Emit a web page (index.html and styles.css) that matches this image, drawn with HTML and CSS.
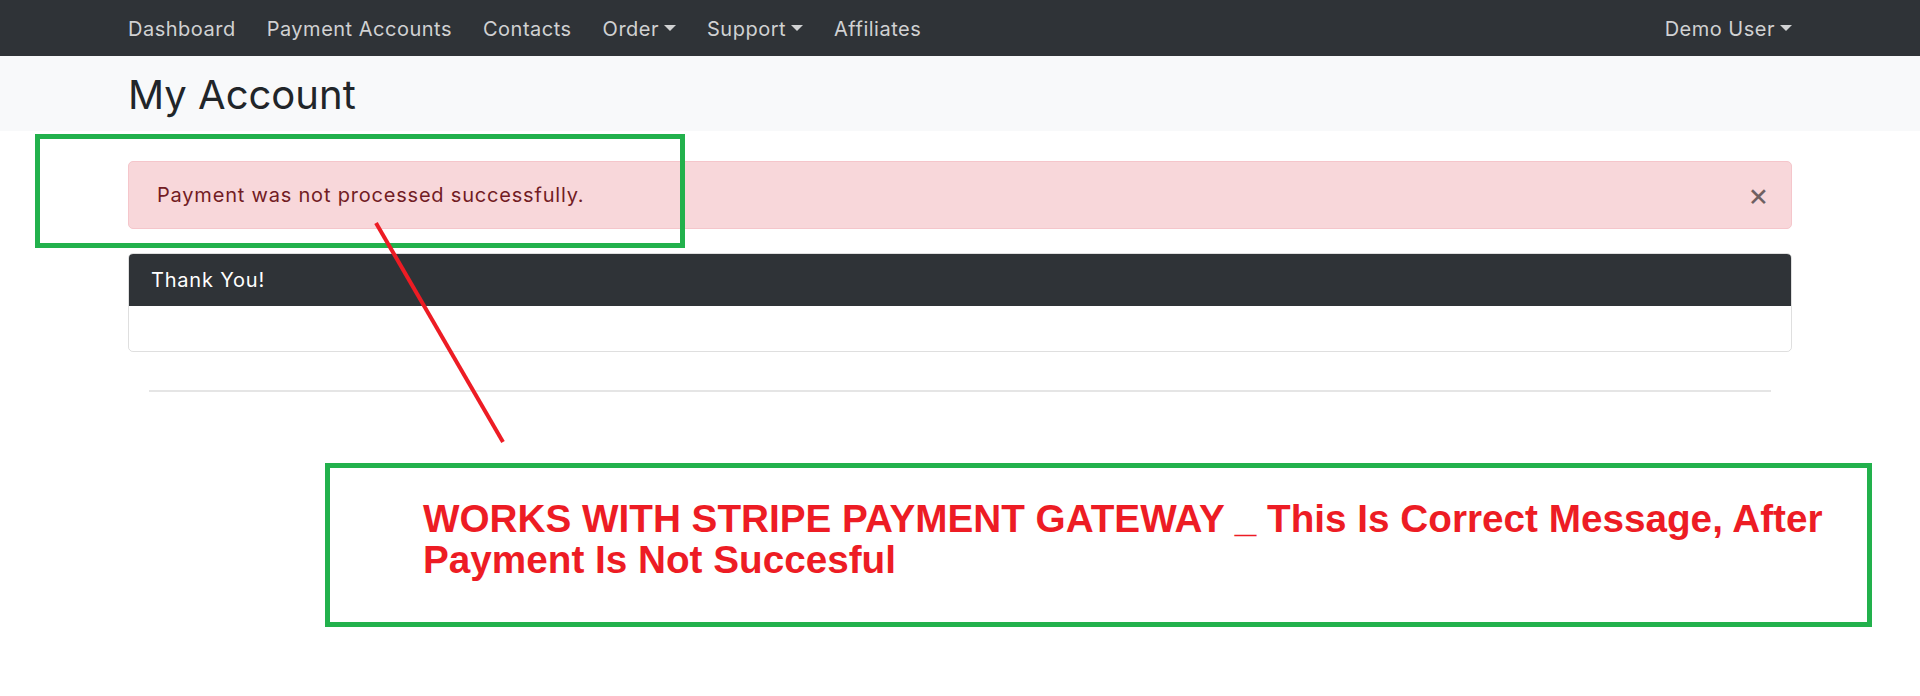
FILE: index.html
```html
<!DOCTYPE html>
<html lang="en">

<head>
    <meta charset="UTF-8">
    <title>My Account</title>
    <link rel="stylesheet" href="styles.css">
</head>

<body>
    <nav class="navbar">
        <div class="container navbar-inner">
            <ul class="nav">
                <li><a href="#">Dashboard</a></li>
                <li><a href="#">Payment Accounts</a></li>
                <li><a href="#">Contacts</a></li>
                <li><a href="#" class="dropdown-toggle">Order</a></li>
                <li><a href="#" class="dropdown-toggle">Support</a></li>
                <li><a href="#">Affiliates</a></li>
            </ul>
            <ul class="nav">
                <li><a href="#" class="dropdown-toggle">Demo User</a></li>
            </ul>
        </div>
    </nav>

    <header class="page-header">
        <div class="container">
            <h1>My Account</h1>
        </div>
    </header>

    <main class="container main">
        <div class="alert">
            <span>Payment was not processed successfully.</span>
            <button class="close" type="button">&times;</button>
        </div>

        <div class="card">
            <div class="card-header">Thank You!</div>
            <div class="card-body"></div>
        </div>

        <div class="divider">
            <hr>
        </div>
    </main>

    <!-- screenshot markup -->
    <div class="mark mark-alert"></div>
    <svg class="mark-line" width="140" height="230" viewBox="0 0 140 230">
        <line x1="6" y1="5" x2="133" y2="224" stroke="#ed1c24" stroke-width="4" />
    </svg>
    <div class="mark mark-note">
        <p>WORKS WITH STRIPE PAYMENT GATEWAY _ This Is Correct Message, After<br>Payment Is Not Succesful</p>
    </div>
</body>

</html>
```

FILE: styles.css
```css
* {
    margin: 0;
    padding: 0;
    box-sizing: border-box;
}

body {
    font-family: Inter, "Noto Sans", sans-serif;
    font-size: 20px;
    line-height: 30px;
    letter-spacing: 0.8px;
    color: #212529;
    background: #fff;
    position: relative;
    min-height: 696px;
}

.container {
    padding: 0 128px;
}

/* navbar */
.navbar {
    background: #2f3337;
}

.navbar-inner {
    display: flex;
    justify-content: space-between;
    height: 56px;
    padding-top: 2px;
    align-items: center;
}

.nav {
    display: flex;
    gap: 31px;
    list-style: none;
}

.nav a {
    color: rgba(255, 255, 255, 0.78);
    text-decoration: none;
    letter-spacing: 0.5px;
}

.dropdown-toggle::after {
    content: "";
    display: inline-block;
    margin-left: 5px;
    vertical-align: 5px;
    border-top: 6px solid;
    border-left: 6px solid transparent;
    border-right: 6px solid transparent;
}

/* page header */
.page-header {
    background: #f8f9fa;
    padding: 15px 0 12px;
}

.page-header h1 {
    font-size: 40px;
    line-height: 48px;
    font-weight: 400;
    letter-spacing: 0;
}

/* content */
.main {
    padding-top: 30px;
}

.alert {
    display: flex;
    justify-content: space-between;
    align-items: center;
    padding: 18px 28px;
    background: #f8d7da;
    border: 1px solid #f5c6cb;
    border-radius: 5px;
    color: #721c24;
}

.close {
    border: 0;
    background: none;
    font-family: Inter, sans-serif;
    font-size: 32px;
    line-height: 30px;
    font-weight: 400;
    color: #000;
    opacity: 0.55;
    margin-right: -6px;
    cursor: pointer;
}

.card {
    margin-top: 24px;
    border: 1px solid rgba(0, 0, 0, 0.125);
    border-radius: 5px;
    overflow: hidden;
}

.card-header {
    background: #2f3337;
    color: #fff;
    padding: 11px 22px;
}

.card-body {
    height: 45px;
}

.divider {
    padding: 38px 21px 0;
}

.divider hr {
    border: 0;
    border-top: 2px solid rgba(0, 0, 0, 0.1);
}

/* annotations drawn over the screenshot */
.mark {
    position: absolute;
    border: 5px solid #22b14c;
}

.mark-alert {
    left: 35px;
    top: 134px;
    width: 650px;
    height: 114px;
}

.mark-line {
    position: absolute;
    left: 370px;
    top: 218px;
}

.mark-note {
    left: 325px;
    top: 463px;
    width: 1547px;
    height: 164px;
    padding: 30px 0 0 93px;
}

.mark-note p {
    font-family: "Liberation Sans", Arial, sans-serif;
    font-weight: 700;
    font-size: 38.7px;
    line-height: 41px;
    letter-spacing: 0;
    color: #ed1c24;
    white-space: nowrap;
}
```
